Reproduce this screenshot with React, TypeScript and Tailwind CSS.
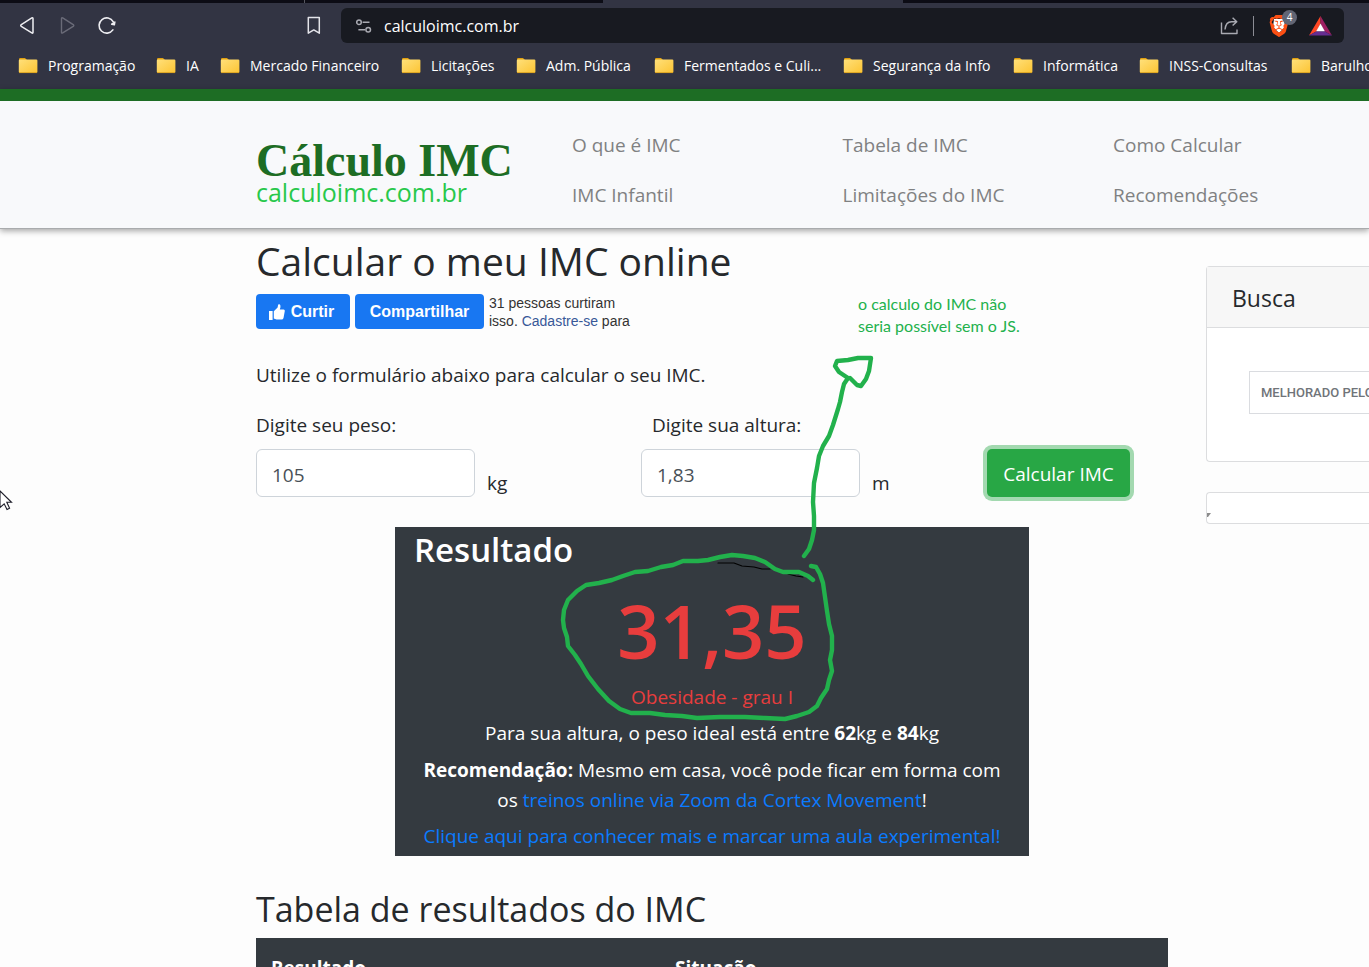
import React from "react";
import { SiBrave } from "react-icons/si";

const bookmarks = [
  "Programação",
  "IA",
  "Mercado Financeiro",
  "Licitações",
  "Adm. Pública",
  "Fermentados e Culi...",
  "Segurança da Info",
  "Informática",
  "INSS-Consultas",
  "Barulho",
];

const navLinks = [
  "O que é IMC",
  "Tabela de IMC",
  "Como Calcular",
  "IMC Infantil",
  "Limitações do IMC",
  "Recomendações",
];

function FolderIcon() {
  return (
    <svg width="20" height="17" viewBox="0 0 20 17" className="shrink-0" aria-hidden="true">
      <defs>
        <linearGradient id="folder" x1="0" y1="0" x2="1" y2="1">
          <stop offset="0" stopColor="#ffe07a" />
          <stop offset="1" stopColor="#fcc433" />
        </linearGradient>
      </defs>
      <path d="M1 2.2Q1 1 2.2 1H7L9 3V6H1Z" fill="#e0a010" />
      <rect x="0.8" y="2.6" width="18.6" height="13.4" rx="1.2" fill="url(#folder)" />
      <path d="M1 15.6H19" stroke="#d39a1c" strokeWidth="0.8" />
    </svg>
  );
}

function Browser() {
  return (
    <header className="bg-[#323443] text-white">
      <div className="flex h-[3px] bg-[#0c0c15]">
        <div className="w-[305px] border-r border-[#55565f]" />
        <div className="flex-1" />
        <div className="w-[300px] bg-[#323443]" />
        <div className="w-[466px]" />
      </div>
      <div className="flex h-[45px] items-center pr-[25px] pl-4">
        <button aria-label="Voltar" className="mr-4 flex size-6 items-center justify-center">
          <svg width="24" height="24" viewBox="0 0 24 24" fill="none" stroke="#eeeef2" strokeWidth="1.5" strokeLinejoin="round">
            <path d="M15.8 3.9Q17 3.4 17 4.7V18.3Q17 19.6 15.8 18.9L5.3 12.4Q4.1 11.5 5.3 10.6Z" />
          </svg>
        </button>
        <button aria-label="Avançar" className="mr-4 flex size-6 items-center justify-center">
          <svg width="24" height="24" viewBox="0 0 24 24" fill="none" stroke="#6a6b78" strokeWidth="1.4" strokeLinejoin="round">
            <path d="M6.7 3.9Q5.5 3.4 5.5 4.7V18.3Q5.5 19.6 6.7 18.9L17.2 12.4Q18.4 11.5 17.2 10.6Z" />
          </svg>
        </button>
        <button aria-label="Recarregar" className="flex size-6 items-center justify-center">
          <svg width="24" height="24" viewBox="0 0 24 24" fill="none" stroke="#eeeef2" strokeWidth="1.6" strokeLinecap="round">
            <path d="M16.9 15.9A7.6 7.6 0 1 1 17.3 7.8" />
            <path d="M18.9 8L18.4 10.8L15.6 10.2Z" fill="#eeeef2" strokeWidth="1.4" strokeLinejoin="round" />
          </svg>
        </button>
        <button aria-label="Favoritar" className="ml-[182px] flex size-6 items-center justify-center">
          <svg width="24" height="24" viewBox="0 0 24 24" fill="none" stroke="#e4e4ea" strokeWidth="1.5" strokeLinejoin="round">
            <path d="M6.3 3.4H17.3V19.2L11.8 15.9L6.3 19.2Z" />
          </svg>
        </button>
        <div className="ml-[15px] flex h-[35px] flex-1 items-center rounded-md bg-[#181a21] pr-3 pl-3">
          <svg width="20" height="20" viewBox="0 0 20 20" fill="none" stroke="#a9aab2" strokeWidth="1.5" className="mr-[11px]" aria-hidden="true">
            <circle cx="6" cy="6.2" r="2.3" />
            <path d="M9.6 6.2H16.5M5.4 13.8H12" />
            <circle cx="15.2" cy="13.8" r="2.3" />
          </svg>
          <input
            aria-label="Endereço"
            defaultValue="calculoimc.com.br"
            className="min-w-0 flex-1 bg-transparent text-[16px] text-white outline-none"
          />
          <button aria-label="Compartilhar página">
            <svg width="22" height="22" viewBox="0 0 22 22" fill="none" stroke="#a9aab2" strokeWidth="1.4" strokeLinejoin="round">
              <path d="M2.5 7.5V18.5H18V14.5" />
              <path d="M6 14.5C6.5 9 9.5 6.8 12.5 6.8H17.5M13.6 2.8L17.8 6.8L13.6 10.6" />
            </svg>
          </button>
          <div className="mx-3 h-5 w-px bg-[#8c8d95]" />
          <button aria-label="Brave Shields" className="relative mr-[15px] flex h-6 w-7 items-center">
            <svg width="20" height="22" viewBox="0 0 20 22" aria-hidden="true" className="absolute left-1">
              <path d="M4 4H14L15 12L9 18L3 12Z" fill="#fff" />
            </svg>
            <SiBrave className="relative ml-[2px] size-[22px] text-[#fb4f14]" />
            <span className="absolute -top-1 left-4 flex size-[15px] items-center justify-center rounded-full bg-[#626574] text-[10px] text-white">
              4
            </span>
          </button>
          <button aria-label="Brave Rewards">
            <svg width="23" height="20" viewBox="0 0 23 20">
              <path d="M11.5 0L0 19.5L7.6 15.2L11.5 8Z" fill="#ff4724" />
              <path d="M11.5 0L23 19.5L15.4 15.2L11.5 8Z" fill="#9e1f63" />
              <path d="M0 19.5H23L15.4 15.2H7.6Z" fill="#662d91" />
              <path d="M11.5 7.4L15.8 15.3H7.2Z" fill="#fff" />
            </svg>
          </button>
        </div>
      </div>
      <nav
        aria-label="Favoritos"
        className="grid h-[41px] grid-cols-[138px_64px_181px_115px_138px_189px_170px_126px_152px_auto] items-center pb-[6px] pl-[18px] text-[14px] whitespace-nowrap"
      >
        {bookmarks.map((name) => (
          <a key={name} href="#" className="flex items-center gap-[10px]">
            <FolderIcon />
            {name}
          </a>
        ))}
      </nav>
    </header>
  );
}

function SiteHeader() {
  return (
    <div className="flex h-[140px] items-start border-t-12 border-b border-t-[#1d6d24] border-b-[#a9abad] bg-[#f8f9fb] pt-[19px] pl-64 shadow-[0_2px_6px_rgba(0,0,0,0.35)]">
      <a href="#" className="w-[316px] pt-5 whitespace-nowrap">
        <span className="block font-['Liberation_Serif',serif] text-[46px] leading-[42px] font-bold text-[#1d6d24]">
          Cálculo IMC
        </span>
        <span className="block text-[25px] leading-5 text-[#28c84b]">calculoimc.com.br</span>
      </a>
      <nav className="grid flex-1 grid-cols-[1fr_1fr_256px] text-[19px] leading-[50px] text-[#808182]">
        {navLinks.map((name) => (
          <a key={name} href="#">
            {name}
          </a>
        ))}
      </nav>
    </div>
  );
}

function Social() {
  return (
    <div className="mt-[9px] flex h-[35px] gap-[5px] font-['Liberation_Sans',sans-serif]">
      <button className="flex w-[94px] items-center justify-center gap-1 rounded bg-[#1877f2] pr-1 text-[16px] font-bold text-white">
        <svg width="19" height="18" viewBox="0 0 19 18" fill="#fff" aria-hidden="true">
          <path d="M1 8H4.6V17H1Z" />
          <path d="M5.8 8.2L9.6 4.6L10.2 1.6Q11.8 .8 12.4 2.4Q12.8 4 11.8 6.4H15.6Q17 6.6 16.8 7.9L15.5 15Q15.1 16.5 13.6 16.5H8.5L5.8 15.4Z" />
        </svg>
        Curtir
      </button>
      <button className="w-[129px] rounded bg-[#1877f2] text-[16px] font-bold text-white">Compartilhar</button>
      <p className="text-[14px] leading-[18px] whitespace-nowrap text-[#333]">
        31 pessoas curtiram
        <br />
        isso.{" "}
        <a href="#" className="text-[#385898]">
          Cadastre-se
        </a>{" "}
        para
      </p>
    </div>
  );
}

function ImcForm() {
  const input =
    "h-12 w-[219px] rounded-md border border-[#ced4da] bg-white px-[15px] pt-1 text-[19px] text-[#495057] outline-none";
  return (
    <form className="mt-5 flex" onSubmit={(e) => e.preventDefault()}>
      <div className="w-[385px]">
        <label htmlFor="peso" className="block pb-[9px] leading-[30px]">
          Digite seu peso:
        </label>
        <div className="flex items-end gap-3">
          <input id="peso" defaultValue="105" className={input} />
          <span className="leading-7">kg</span>
        </div>
      </div>
      <div className="w-[346px]">
        <label htmlFor="altura" className="block pb-[9px] pl-[11px] leading-[30px]">
          Digite sua altura:
        </label>
        <div className="flex items-end gap-3">
          <input id="altura" defaultValue="1,83" className={input} />
          <span className="leading-7">m</span>
        </div>
      </div>
      <button className="h-12 w-[143px] self-end rounded-[5px] bg-[#28a745] pt-[2px] text-white ring-4 ring-[#a3d9b0]">
        Calcular IMC
      </button>
    </form>
  );
}

function Result() {
  return (
    <section className="mx-auto mt-[30px] h-[329px] w-[634px] bg-[#343a40] text-center text-white">
      <h2 className="pl-[19px] text-left text-[33px] leading-[46px] font-semibold">Resultado</h2>
      <p className="mt-[10px] text-[74px] leading-24 font-semibold text-[#e83d3d]">31,35</p>
      <p className="mt-[3px] leading-[30px] text-[#e83d3d]">Obesidade - grau I</p>
      <p className="mt-[6px] leading-[30px]">
        Para sua altura, o peso ideal está entre <b>62</b>kg e <b>84</b>kg
      </p>
      <p className="mt-[7px] leading-[30px]">
        <b>Recomendação:</b> Mesmo em casa, você pode ficar em forma com
        <br />
        os{" "}
        <a href="#" className="text-[#0a7bff]">
          treinos online via Zoom da Cortex Movement
        </a>
        !
      </p>
      <p className="mt-[6px] leading-[30px]">
        <a href="#" className="text-[#0a7bff]">
          Clique aqui para conhecer mais e marcar uma aula experimental!
        </a>
      </p>
    </section>
  );
}

function Sidebar() {
  return (
    <aside className="mt-[37px] w-[163px] overflow-hidden whitespace-nowrap">
      <section className="h-[196px] rounded-l border border-r-0 border-[#dcdddf] bg-white">
        <h2 className="h-[61px] border-b border-[#dcdddf] bg-[#f7f7f7] pl-[25px] text-[23px] leading-[62px] font-medium">
          Busca
        </h2>
        <div className="mt-[43px] ml-[42px] h-[43px] overflow-hidden border border-r-0 border-[#dadce0] pl-[11px] font-[Roboto,sans-serif] text-[13px] leading-[41px] font-medium text-[#707479]">
          MELHORADO PELO
        </div>
      </section>
      <section className="mt-[30px] h-8 rounded-l border border-r-0 border-[#dcdddf] bg-white pt-5">
        <svg width="4" height="4" viewBox="0 0 4 4" aria-hidden="true">
          <path d="M0 0H4L1 4H0Z" fill="#8b8b8b" />
        </svg>
      </section>
    </aside>
  );
}

function Annotations() {
  return (
    <>
      <svg
        width="1369"
        height="967"
        viewBox="0 0 1369 967"
        fill="none"
        strokeLinecap="round"
        strokeLinejoin="round"
        className="pointer-events-none absolute top-0 left-0"
        aria-hidden="true"
      >
        <path d="M718 563H734L742 566L754 567L762 569L770 569M788 574L796 576L803 577" stroke="#000" strokeWidth="1.2" />
        <g stroke="#22b14c" strokeWidth="4.4">
          <path d="M813 580L808 576L799 572H783L775 569L765 562L755 558L743 556L732 555L720 557L708 560L698 561H683L673 565L661 567L648 571L635 572L623 576L612 580L599 583L586 585L577 591L568 600L564 610L563 620L564 628L567 637L568 646L575 655L581 664L588 676L598 689L609 701L620 709L631 713H650L665 715L682 716L697 718L720 717H745L765 718L785 719L797 716L809 712L817 706L821 698L827 689L829 680L832 671L830 660L832 650V636L829 624L827 611L825 597L823 583L820 574L816 567L811 566" />
          <path d="M804 556L809 549L812 540L814 530V516L813 502L814 483L817 468L819 456L823 446L829 436L833 425L838 409L840 402L842 392L844 384L848 378" />
          <path d="M848 378L839 372L835 366L837 361L848 360L858 358L871 358L869 371L866 379L861 386L857 385L850 378" />
        </g>
      </svg>
      <p className="absolute top-[293px] left-[858px] font-[Lato,sans-serif] text-[16px] leading-[22px] whitespace-nowrap text-[#22b14c]">
        o calculo do IMC não
        <br />
        seria possível sem o JS.
      </p>
      <svg width="13" height="22" viewBox="0 0 13 22" className="absolute top-[490px] left-0" aria-hidden="true">
        <path d="M0 1L11.5 12.3H6.8L9.6 18.2L7 19.5L4.2 13.8L0 17.5Z" fill="#fff" stroke="#1c1c28" strokeWidth="1.1" />
      </svg>
    </>
  );
}

export default function App() {
  return (
    <div className="relative h-screen overflow-hidden bg-[#fdfdfd] font-['Open_Sans',sans-serif] text-[19px] text-[#26292c]">
      <Browser />
      <SiteHeader />
      <div className="flex gap-[38px] pl-64">
        <main className="min-w-0 flex-1">
          <h1 className="mt-2 text-[39px] leading-12 font-medium">Calcular o meu IMC online</h1>
          <Social />
          <p className="mt-[31px] leading-[30px]">Utilize o formulário abaixo para calcular o seu IMC.</p>
          <ImcForm />
          <Result />
          <h2 className="mt-8 text-[34px] leading-[42px] font-medium">Tabela de resultados do IMC</h2>
          <table className="mt-2 w-full bg-[#343a40] text-left text-white">
            <thead>
              <tr>
                <th className="w-[404px] px-[15px] py-[15px] leading-[30px]">Resultado</th>
                <th className="px-[15px] py-[15px] leading-[30px]">Situação</th>
              </tr>
            </thead>
          </table>
        </main>
        <Sidebar />
      </div>
      <Annotations />
    </div>
  );
}
